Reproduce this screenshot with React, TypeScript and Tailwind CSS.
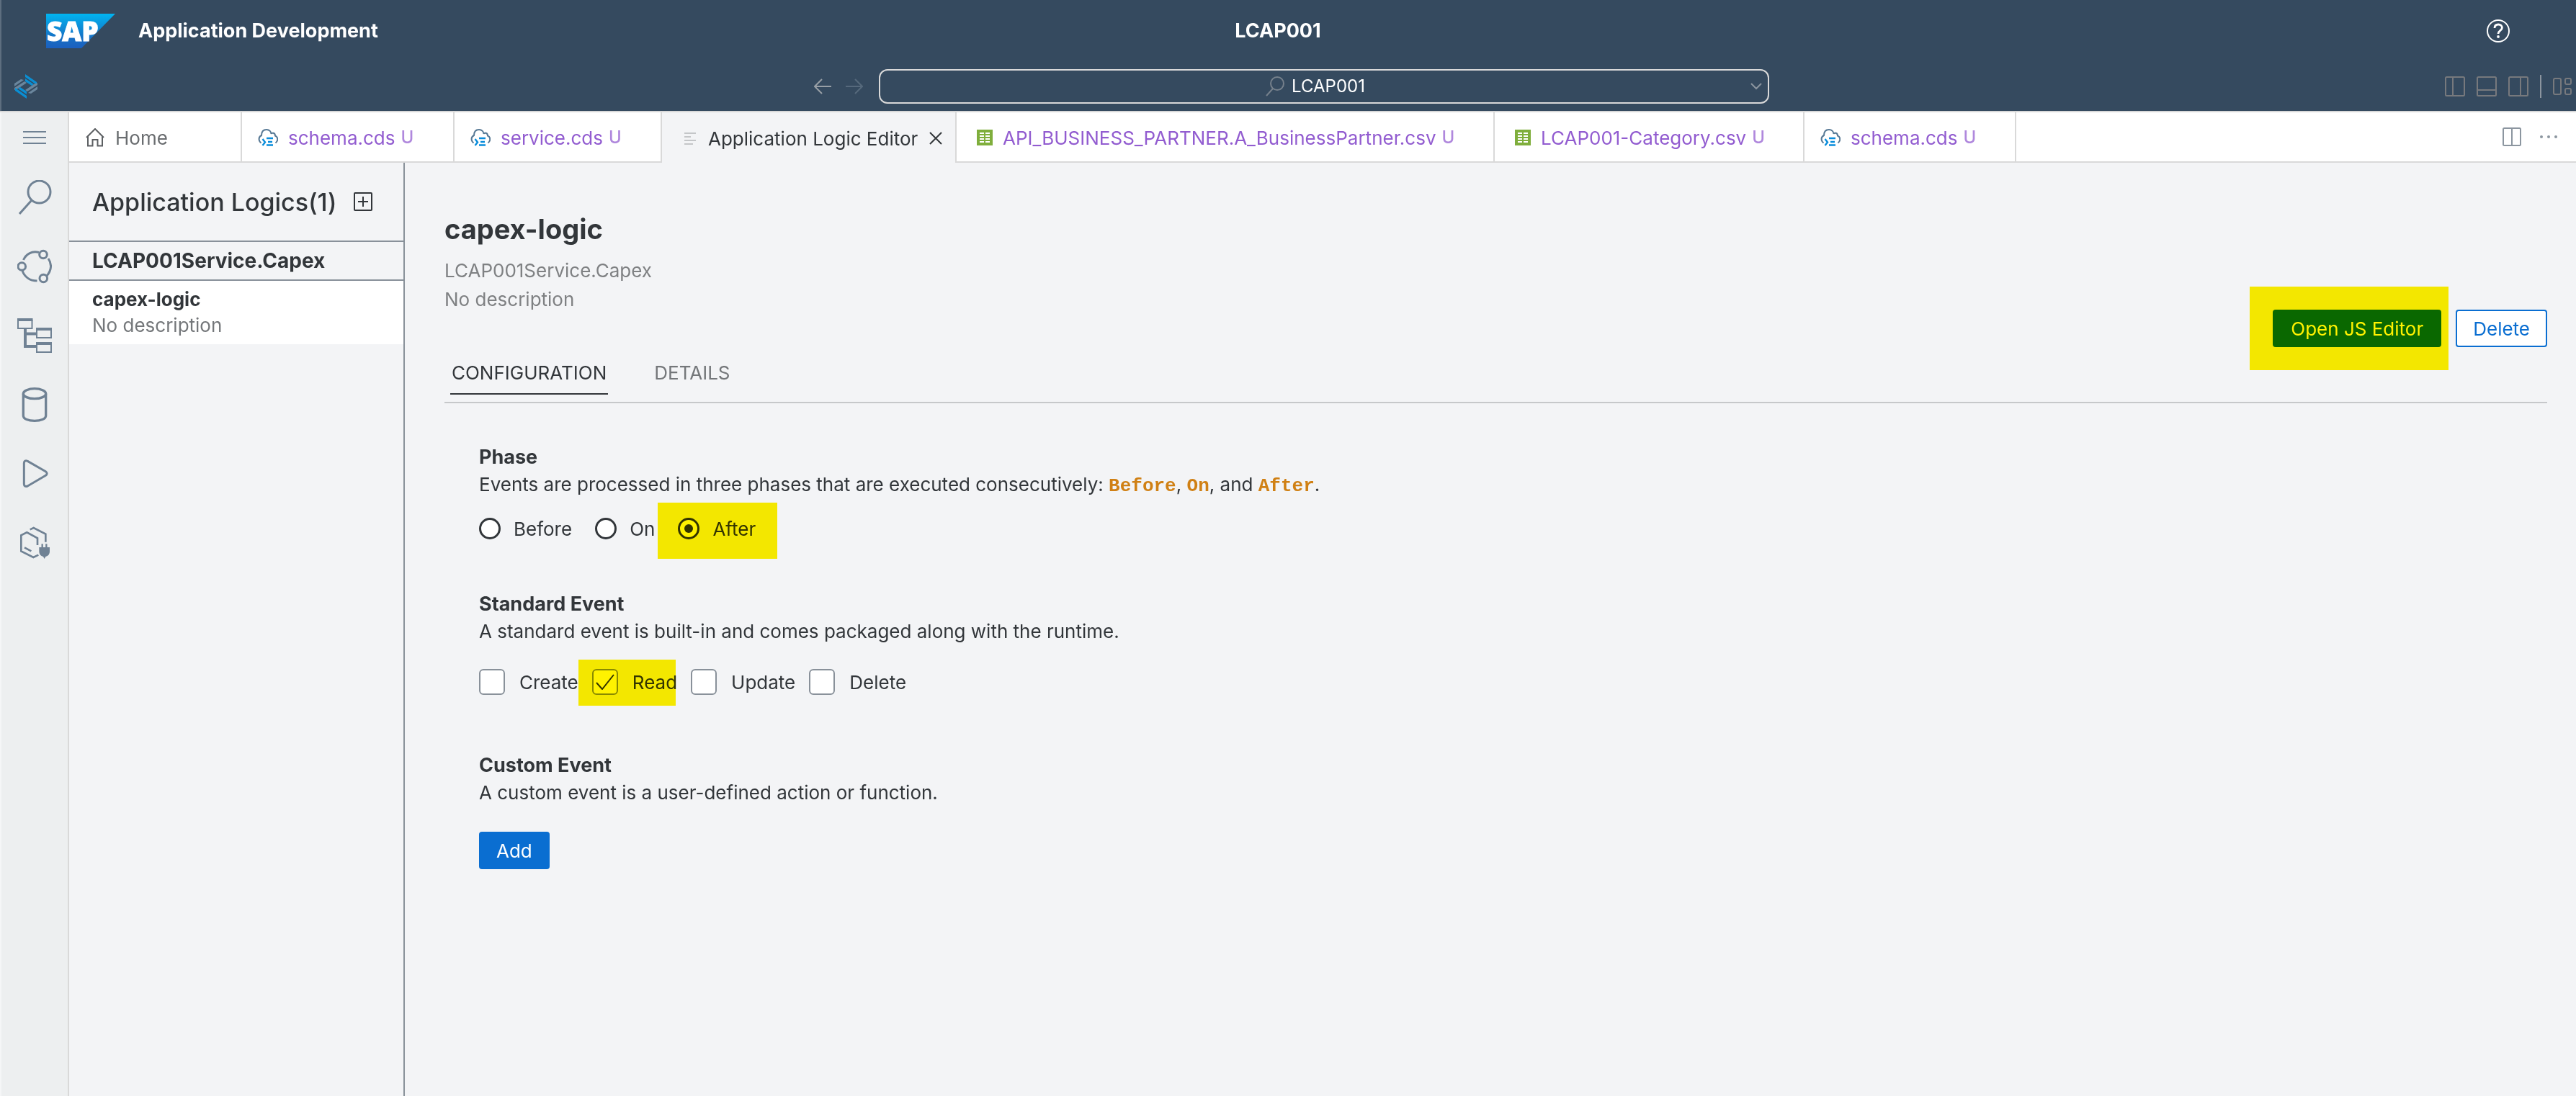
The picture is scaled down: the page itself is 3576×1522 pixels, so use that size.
import { useState, type ReactNode } from "react";

/* ---------- icons ---------- */

function SapLogo() {
  return (
    <svg width="96" height="48" viewBox="0 0 96 48" role="img" aria-label="SAP" className="overflow-visible">
      <defs>
        <linearGradient id="sapBlue" x1="0" y1="0" x2="0" y2="1">
          <stop offset="0" stopColor="#00b5f1" />
          <stop offset="0.3" stopColor="#0b96dd" />
          <stop offset="0.7" stopColor="#1670c5" />
          <stop offset="1" stopColor="#1c5fbe" />
        </linearGradient>
      </defs>
      <path d="M0 0H96L49 48H0z" fill="url(#sapBlue)" />
      <text x="1" y="38" fontSize="37" fontWeight="800" fill="#fff" stroke="#fff" strokeWidth="1" className="font-['Open_Sans',sans-serif]">
        SAP
      </text>
    </svg>
  );
}

function StudioIcon() {
  const half = (
    <>
      <path d="M15 0 31 11V15L15 4z" fill="#0a8fd4" />
      <path d="M15 6 27 14 24 16 15 10z" fill="#0a8fd4" />
      <path d="M0 13 9 7 13 8 0 17z" fill="#6a869d" />
      <path d="M0 19 14 10 17 12 5 20 0 22z" fill="#6a869d" />
    </>
  );
  return (
    <svg width="32" height="34" viewBox="0 0 32 34" aria-hidden="true">
      {half}
      <g transform="rotate(180 16 17)">{half}</g>
    </svg>
  );
}

function HelpIcon() {
  return (
    <svg width="32" height="32" viewBox="0 0 32 32" fill="none" stroke="#fff" aria-hidden="true">
      <circle cx="16" cy="16" r="15" strokeWidth="2" />
      <path d="M11 12c0-3 2-5 5.200-5 3 0 5.200 2 5.200 4.600C21.400 15.500 16 15.500 16 20" strokeWidth="2.800" />
      <circle cx="16" cy="24" r="1.900" fill="#fff" stroke="none" />
    </svg>
  );
}

function ArrowIcon({ flip = false }: { flip?: boolean }) {
  return (
    <svg width="24" height="24" viewBox="0 0 24 24" fill="none" stroke={flip ? "#56697c" : "#989fa6"} strokeWidth="2" aria-hidden="true">
      {flip ? <path d="M0 12H23M13 2 23 12 13 22" /> : <path d="M24 12H1M11 2 1 12 11 22" />}
    </svg>
  );
}

function SmallSearchIcon() {
  return (
    <svg width="26" height="28" viewBox="0 0 26 28" fill="none" stroke="#76818c" strokeWidth="2" aria-hidden="true">
      <circle cx="16" cy="10" r="9" />
      <path d="M10 17 1 27" />
    </svg>
  );
}

function PanelIcon({ side }: { side: "left" | "bottom" | "right" }) {
  return (
    <svg width="28" height="28" viewBox="0 0 28 28" fill="none" stroke="#77797d" strokeWidth="2" aria-hidden="true">
      <rect x="1" y="1" width="26" height="26" rx="1.500" />
      {side === "left" && <path d="M11 1V27" />}
      {side === "right" && <path d="M17 1V27" />}
      {side === "bottom" && <path d="M1 19H27" />}
    </svg>
  );
}

function LayoutIcon() {
  return (
    <svg width="26" height="24" viewBox="0 0 26 24" fill="none" stroke="#77797d" strokeWidth="2" aria-hidden="true">
      <rect x="1" y="1" width="10" height="22" rx="2" />
      <rect x="17" y="1" width="8" height="8" rx="2" />
      <rect x="17" y="15" width="8" height="8" rx="2" />
    </svg>
  );
}

const RAIL = "#708294";

function MenuIcon() {
  return (
    <svg width="32" height="18" viewBox="0 0 32 18" stroke={RAIL} strokeWidth="2" aria-hidden="true">
      <path d="M0 1H32M0 9H32M0 17H32" />
    </svg>
  );
}

function RailIcon({ children, box }: { children: ReactNode; box: string }) {
  return (
    <svg width="48" height="48" viewBox={box} fill="none" stroke={RAIL} aria-hidden="true">
      {children}
    </svg>
  );
}

const railItems: { name: string; icon: ReactNode }[] = [
  {
    name: "Search",
    icon: (
      <RailIcon box="24 250 48 48">
        <circle cx="54.500" cy="266.500" r="15.500" strokeWidth="3" />
        <path d="M44 278 27 297" strokeWidth="3" />
      </RailIcon>
    ),
  },
  {
    name: "Source Control",
    icon: (
      <RailIcon box="24 346 48 48">
        <g strokeWidth="3">
          <circle cx="60" cy="353.500" r="5.300" />
          <circle cx="30.300" cy="370" r="5.300" />
          <circle cx="60.300" cy="386.500" r="5.300" />
          <path d="M32.500 361C36 353 44 348 54 350.500M67 359C72 366 72 375 65 383M31 376C34 384 41 390 51.500 390" />
        </g>
      </RailIcon>
    ),
  },
  {
    name: "Project Explorer",
    icon: (
      <RailIcon box="0 0 48 48">
        <g strokeWidth="2">
          <path d="M1 3H20.500V14H1zM27 16H47V27H27zM27 36H47V47H27z" />
        </g>
        <path d="M0 2H21.500M26 15H48M26 35H48" strokeWidth="4" />
        <path d="M11 15V41M9 21.500H26M9 39H26" strokeWidth="4" />
      </RailIcon>
    ),
  },
  {
    name: "Data Models",
    icon: (
      <RailIcon box="72 234 144 144">
        <g strokeWidth="10">
          <ellipse cx="144" cy="260" rx="47" ry="21" />
          <path d="M97 260V352C97 366 118 373 144 373S191 366 191 352V260" />
        </g>
      </RailIcon>
    ),
  },
  {
    name: "Run",
    icon: (
      <RailIcon box="72 522 144 144">
        <path d="M115 541 190 584Q201 592 190 601L115 645Q101 650 100 637V549Q101 536 115 541z" strokeWidth="9" />
      </RailIcon>
    ),
  },
  {
    name: "Extensions",
    icon: (
      <RailIcon box="72 812 144 144">
        <g strokeWidth="8">
          <path d="M125 828 140 821 190 847V880M156 893V864L112 840 88 852V918L139 944 160 934M102 903 130 918" />
          <path d="M176 888V904M193 888V904" strokeWidth="7" />
        </g>
        <path d="M163 902H207V920Q207 936 190 941L185 950 180 941Q163 936 163 920z" fill={RAIL} stroke="none" />
      </RailIcon>
    ),
  },
];

function HomeIcon() {
  return (
    <svg width="26" height="26" viewBox="0 0 26 26" fill="none" stroke="#5c5f62" strokeWidth="2" aria-hidden="true">
      <path d="M1 13 13 1 25 13M3 11V24.500H9.500V16H16.500V24.500H23V11" />
    </svg>
  );
}

function CdsIcon() {
  return (
    <svg width="28" height="24" viewBox="0 0 28 24" fill="none" strokeWidth="2" aria-hidden="true">
      <path d="M4.500 19.500C1 17 0 11.500 5 9 5 3.500 8 1 12 1 16 1 18.500 4 18.500 7 19 5 24 5 24 9.500 28 11 28.500 16.500 24.500 19.500" stroke="#567894" />
      <path d="M6.500 14 10 18.500 6.500 23M12 13H21M14 18H20M12 22.500H21" stroke="#0a8ddb" strokeWidth="2.400" />
    </svg>
  );
}

function CsvIcon() {
  return (
    <svg width="28" height="22" viewBox="0 0 28 22" aria-hidden="true">
      <rect x="6" width="22" height="22" fill="#7fae3c" />
      <path d="M10 5H16M18 5H24M10 9H16M18 9H24M10 13H16M18 13H24M10 17H16M18 17H24" stroke="#fff" strokeWidth="2" />
    </svg>
  );
}

function EditorIcon() {
  return (
    <svg width="24" height="18" viewBox="0 0 24 18" stroke="#c4c6c8" strokeWidth="2" aria-hidden="true">
      <path d="M7 2H23M7 7H16M7 12H23M7 17H19" />
    </svg>
  );
}

/* ---------- header ---------- */

function Header() {
  return (
    <header className="border-b-2 border-[#d9d9d9] bg-[#354a5f] text-white">
      <div className="grid h-[86px] grid-cols-[1fr_auto_1fr] items-center border-l-2 border-[#5d6e7f] pr-[92px] pl-[62px] text-[27px] font-bold">
        <div className="flex items-center gap-8">
          <SapLogo />
          <span>Application Development</span>
        </div>
        <h1>LCAP001</h1>
        <button type="button" aria-label="Help" className="justify-self-end">
          <HelpIcon />
        </button>
      </div>
      <div className="grid h-[68px] grid-cols-[1fr_auto_1fr] items-center border-l-2 border-[#5d6e7f] pr-[6px] pl-[18px]">
        <StudioIcon />
        <div className="mr-1 flex items-center">
          <button type="button" aria-label="Go back" className="mr-5">
            <ArrowIcon />
          </button>
          <button type="button" aria-label="Go forward" className="mr-[22px]" disabled>
            <ArrowIcon flip />
          </button>
          <button
            type="button"
            className="flex h-12 w-[1236px] items-center rounded-xl border-2 border-[#d9d9d9] pr-2 text-2xl"
          >
            <span className="flex flex-1 items-center justify-center gap-[10px]">
              <SmallSearchIcon />
              LCAP001
            </span>
            <svg width="16" height="10" viewBox="0 0 16 10" fill="none" stroke="#8b959f" strokeWidth="2" aria-hidden="true">
              <path d="M1 1 8 8 15 1" />
            </svg>
          </button>
        </div>
        <div className="flex items-center gap-4 justify-self-end">
          <button type="button" aria-label="Toggle primary side bar"><PanelIcon side="left" /></button>
          <button type="button" aria-label="Toggle panel"><PanelIcon side="bottom" /></button>
          <button type="button" aria-label="Toggle secondary side bar"><PanelIcon side="right" /></button>
          <span className="h-8 w-0.5 bg-[#8c959f]" />
          <button type="button" aria-label="Customize layout"><LayoutIcon /></button>
        </div>
      </div>
    </header>
  );
}

function Rail() {
  return (
    <nav aria-label="Activity bar" className="flex w-24 shrink-0 flex-col border-r-2 border-l-2 border-r-[#d9d9d9] border-l-[#f5f6f7] bg-[#edeff0]">
      <button type="button" aria-label="Menu" className="flex h-[70px] items-center justify-center">
        <MenuIcon />
      </button>
      {railItems.map((item) => (
        <button key={item.name} type="button" aria-label={item.name} className="flex h-24 items-center justify-center">
          {item.icon}
        </button>
      ))}
    </nav>
  );
}

/* ---------- editor tabs ---------- */

type EditorTab = { label: string; icon: ReactNode; width: string; kind: "home" | "file" | "active" };

const editorTabs: EditorTab[] = [
  { label: "Home", icon: <HomeIcon />, width: "w-60", kind: "home" },
  { label: "schema.cds", icon: <CdsIcon />, width: "w-[295px]", kind: "file" },
  { label: "service.cds", icon: <CdsIcon />, width: "w-[288px]", kind: "file" },
  { label: "Application Logic Editor", icon: <EditorIcon />, width: "w-[409px]", kind: "active" },
  { label: "API_BUSINESS_PARTNER.A_BusinessPartner.csv", icon: <CsvIcon />, width: "w-[747px]", kind: "file" },
  { label: "LCAP001-Category.csv", icon: <CsvIcon />, width: "w-[430px]", kind: "file" },
  { label: "schema.cds", icon: <CdsIcon />, width: "w-[294px]", kind: "file" },
];

const tabTone = {
  home: "border-b-2 bg-white text-[#6a6d70]",
  file: "border-b-2 bg-white text-[#925cd0]",
  active: "bg-[#f3f4f6] text-[#32363a]",
};

function EditorTabs() {
  return (
    <div className="flex h-[70px] text-[26px]">
      {editorTabs.map((tab, i) => (
        <div key={i} className={`flex shrink-0 items-center border-r-2 border-[#d9d9d9] pt-0.5 pl-5 ${tab.width} ${tabTone[tab.kind]}`}>
          <button type="button" className="flex items-center whitespace-nowrap">
            <span className="mr-3 flex w-8 justify-center">{tab.icon}</span>
            {tab.label}
            {tab.kind === "file" && <span className="ml-2 text-2xl font-medium text-[#b088dd]">U</span>}
          </button>
          {tab.kind === "active" && (
            <button type="button" aria-label="Close" className="ml-4">
              <svg width="18" height="18" viewBox="0 0 18 18" stroke="#32363a" strokeWidth="2" aria-hidden="true">
                <path d="M1 1 17 17M17 1 1 17" />
              </svg>
            </button>
          )}
        </div>
      ))}
      <div className="flex flex-1 items-center justify-end gap-6 border-b-2 border-[#d9d9d9] bg-white pr-6">
        <button type="button" aria-label="Split editor">
          <svg width="26" height="26" viewBox="0 0 26 26" fill="none" stroke="#8c96a0" strokeWidth="2" aria-hidden="true">
            <rect x="1" y="1" width="24" height="24" rx="1.500" />
            <path d="M13 1V25" />
          </svg>
        </button>
        <button type="button" aria-label="More actions">
          <svg width="28" height="4" viewBox="0 0 28 4" fill="#8c96a0" aria-hidden="true">
            <circle cx="4" cy="2" r="2" />
            <circle cx="14" cy="2" r="2" />
            <circle cx="24" cy="2" r="2" />
          </svg>
        </button>
      </div>
    </div>
  );
}

/* ---------- logic list ---------- */

function LogicList() {
  return (
    <aside className="w-[466px] shrink-0 border-r-2 border-[#89919a]">
      <div className="flex h-[108px] items-center gap-6 pl-8">
        <h2 className="text-[34px] font-medium">Application Logics(1)</h2>
        <button type="button" aria-label="Add application logic">
          <svg width="26" height="26" viewBox="0 0 26 26" fill="none" stroke="#32363a" strokeWidth="2" aria-hidden="true">
            <rect x="1" y="1" width="24" height="24" rx="1" />
            <path d="M13 6V20M6 13H20" />
          </svg>
        </button>
      </div>
      <h3 className="border-y-2 border-[#89919a] pl-8 text-[28px] leading-[52px] font-bold">LCAP001Service.Capex</h3>
      <button type="button" className="block w-full bg-white py-2 pl-8 text-left text-[26px] leading-9">
        <span className="block font-bold">capex-logic</span>
        <span className="block text-[#74777a]">No description</span>
      </button>
    </aside>
  );
}

/* ---------- editor ---------- */

/* Marker-pen rectangle laid over the content it points out. */
function Marker({ className }: { className: string }) {
  return <span aria-hidden="true" className={`pointer-events-none absolute bg-[#fff200] mix-blend-multiply ${className}`} />;
}

function Code({ children }: { children: string }) {
  return <code className="font-['Liberation_Mono',monospace] leading-none font-bold text-[#d08014]">{children}</code>;
}

function SectionTitle({ title, children }: { title: string; children: ReactNode }) {
  return (
    <>
      <h3 className="text-[27px] leading-[38px] font-bold">{title}</h3>
      <p className="text-[26px] leading-[38px]">{children}</p>
    </>
  );
}

function Editor() {
  const [phase, setPhase] = useState("After");
  const [events, setEvents] = useState<string[]>(["Read"]);
  const toggle = (name: string) =>
    setEvents((list) => (list.includes(name) ? list.filter((n) => n !== name) : [...list, name]));

  return (
    <main className="min-w-0 flex-1 pt-16 pr-10 pl-[55px] text-[26px]">
      <div className="flex justify-between border-b-2 border-[#c6c8ca]">
        <div>
          <h2 className="text-[38px] leading-[56px] font-bold">capex-logic</h2>
          <p className="mt-[10px] leading-10 text-[#7f8183]">LCAP001Service.Capex</p>
          <p className="leading-10 text-[#7f8183]">No description</p>
          <div role="tablist" className="mt-[62px] mb-[10px] ml-2 flex gap-[62px] leading-10">
            <button type="button" role="tab" aria-selected="true" className="border-b-2 border-[#32363a] px-0.5 pb-2">
              CONFIGURATION
            </button>
            <button type="button" role="tab" aria-selected="false" className="border-b-2 border-transparent px-0.5 pb-2 text-[#74777a]">
              DETAILS
            </button>
          </div>
        </div>
        <div className="mb-[76px] flex gap-5 self-end">
          <div className="relative">
            <button type="button" className="h-[52px] rounded bg-[#0a6ed1] px-[25px] text-white">
              Open JS Editor
            </button>
            <Marker className="-inset-y-8 -right-[10px] -left-8" />
          </div>
          <button type="button" className="h-[52px] rounded border-2 border-[#0a6ed1] bg-white px-[22px] text-[#0a6ed1]">
            Delete
          </button>
        </div>
      </div>

      <div className="pt-14 pl-12">
        <section>
          <SectionTitle title="Phase">
            Events are processed in three phases that are executed consecutively: <Code>Before</Code>, <Code>On</Code>, and{" "}
            <Code>After</Code>.
          </SectionTitle>
          <div role="radiogroup" aria-label="Phase" className="mt-6 flex h-9 gap-8">
            {["Before", "On", "After"].map((name) => (
              <label key={name} className="relative flex items-center gap-[18px]">
                <span className="grid place-items-center">
                  <input
                    type="radio"
                    name="phase"
                    checked={phase === name}
                    onChange={() => setPhase(name)}
                    className="peer col-start-1 row-start-1 size-[30px] appearance-none rounded-full border-[3px] border-[#32363a] bg-white"
                  />
                  <span className="pointer-events-none col-start-1 row-start-1 hidden size-3 rounded-full bg-[#32363a] peer-checked:block" />
                </span>
                {name}
                {name === "After" && <Marker className="-top-[18px] -right-[30px] -bottom-6 -left-7" />}
              </label>
            ))}
          </div>
        </section>

        <section className="mt-[68px]">
          <SectionTitle title="Standard Event">
            A standard event is built-in and comes packaged along with the runtime.
          </SectionTitle>
          <div className="mt-8 flex h-[38px] gap-[19px]">
            {["Create", "Read", "Update", "Delete"].map((name) => (
              <label key={name} className="relative flex items-center gap-5">
                <span className="grid place-items-center">
                  <input
                    type="checkbox"
                    checked={events.includes(name)}
                    onChange={() => toggle(name)}
                    className="peer col-start-1 row-start-1 size-9 appearance-none rounded-md border-2 border-[#89919a] bg-white"
                  />
                  <svg
                    width="26"
                    height="22"
                    viewBox="0 0 26 22"
                    fill="none"
                    stroke="#32363a"
                    strokeWidth="2"
                    aria-hidden="true"
                    className="pointer-events-none col-start-1 row-start-1 hidden peer-checked:block"
                  >
                    <path d="M1 12 9 21 25 1" />
                  </svg>
                </span>
                {name}
                {name === "Read" && <Marker className="-top-3 right-0.5 -bottom-[14px] -left-[19px]" />}
              </label>
            ))}
          </div>
        </section>

        <section className="mt-[78px]">
          <SectionTitle title="Custom Event">A custom event is a user-defined action or function.</SectionTitle>
          <button type="button" className="mt-[35px] h-[52px] rounded bg-[#0a6ed1] px-6 text-white">
            Add
          </button>
        </section>
      </div>
    </main>
  );
}

export default function App() {
  return (
    <div className="flex min-h-screen flex-col bg-[#f3f4f6] font-['Inter',sans-serif] text-[#32363a]">
      <Header />
      <div className="flex flex-1">
        <Rail />
        <div className="flex min-w-0 flex-1 flex-col">
          <EditorTabs />
          <div className="flex flex-1">
            <LogicList />
            <Editor />
          </div>
        </div>
      </div>
    </div>
  );
}
